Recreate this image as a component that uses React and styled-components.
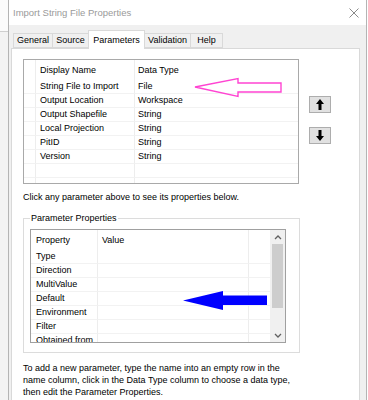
import React from "react";
import styled, { createGlobalStyle } from "styled-components";

const GlobalStyle = createGlobalStyle`
  html, body { margin: 0; padding: 0; background: #ffffff; }
  body {
    font-family: "Liberation Sans", Arial, sans-serif;
    font-size: 9px;
    color: #000;
  }
  * { box-sizing: border-box; }
`;

const Page = styled.div`
  position: relative;
  width: 368px;
  height: 400px;
  overflow: hidden;
  display: flex;
  background: #ffffff;
`;

const LeftStrip = styled.div`
  width: 8px;
  display: flex;
  flex-direction: column;
`;

const StripTop = styled.div`
  height: 32px;
  background: #fbfbfb;
  border-bottom: 1px solid #cfcfcf;
`;

const StripBottom = styled.div`
  flex: 1;
  background: #f3f3f3;
`;

const Dialog = styled.div`
  width: 359px;
  display: flex;
  flex-direction: column;
  background: #f0f0f0;
  border-left: 1px solid #b4b4b4;
  border-right: 1px solid #b4b4b4;
`;

const TitleBar = styled.div`
  height: 25px;
  flex: none;
  background: #ffffff;
  display: flex;
  align-items: center;
  justify-content: space-between;
  padding: 0 7px 0 4px;
`;

const Title = styled.span`
  color: #9a9a9a;
  font-size: 9.5px;
`;

const Body = styled.div`
  flex: 1;
  display: flex;
  flex-direction: column;
  padding-top: 5px;
`;

const TabRow = styled.div`
  display: flex;
  align-items: flex-end;
  height: 18px;
  padding-left: 4px;
`;

const Tab = styled.div`
  position: relative;
  width: ${(p) => p.$w}px;
  height: ${(p) => (p.$active ? 19 : 15)}px;
  margin-bottom: ${(p) => (p.$active ? -1 : 0)}px;
  margin-left: ${(p) => (p.$first ? 0 : -1)}px;
  z-index: ${(p) => (p.$active ? 2 : 1)};
  background: ${(p) => (p.$active ? "#ffffff" : "#f0f0f0")};
  border: 1px solid #d9d9d9;
  border-bottom: ${(p) => (p.$active ? "none" : "1px solid #d9d9d9")};
  display: flex;
  align-items: ${(p) => (p.$active ? "flex-start" : "center")};
  padding-top: ${(p) => (p.$active ? 4 : 0)}px;
  justify-content: center;
  white-space: nowrap;
  line-height: 11px;
`;

const Panel = styled.div`
  flex: 1;
  margin: 0 6px 0 2px;
  background: #ffffff;
  border: 1px solid #d9d9d9;
  padding: 10px 11px;
  display: flex;
  flex-direction: column;
`;

const TopRow = styled.div`
  display: flex;
  gap: 10px;
`;

const ListBox = styled.div`
  width: 276px;
  height: 125px;
  border: 1px solid #a9a9a9;
  overflow: hidden;
  background: #fff;
`;

const Grid = styled.div`
  display: grid;
  grid-template-columns: ${(p) => p.$cols};
  grid-auto-rows: 14px;
  grid-template-rows: 20px;
`;

const Cell = styled.div`
  border-right: ${(p) => (p.$last ? "none" : "1px solid #ededed")};
  border-bottom: ${(p) => (p.$head ? "none" : "1px solid #f2f2f2")};
  padding-left: ${(p) => p.$pad ?? 4}px;
  display: flex;
  align-items: center;
  white-space: nowrap;
  overflow: hidden;
  line-height: 13px;
`;

const ButtonCol = styled.div`
  display: flex;
  flex-direction: column;
  gap: 14px;
  padding-top: 37px;
`;

const MoveButton = styled.div`
  width: 22px;
  height: 17px;
  background: #e1e1e1;
  border: 1px solid #adadad;
  display: flex;
  align-items: center;
  justify-content: center;
`;

const Hint = styled.div`
  margin-top: 7px;
  line-height: 12px;
`;

const GroupBox = styled.fieldset`
  margin: 9px 0 0 0;
  width: 277px;
  border: 1px solid #dcdcdc;
  padding: 5px 13px 9px 6px;
  min-width: 0;
`;

const Legend = styled.legend`
  padding: 0 1px;
  line-height: 12px;
`;

const PropBox = styled.div`
  width: 256px;
  height: 114px;
  border: 1px solid #a0a0a0;
  display: flex;
  overflow: hidden;
`;

const PropGridWrap = styled.div`
  flex: 1;
  overflow: hidden;
`;

const ScrollBar = styled.div`
  width: 15px;
  background: #f0f0f0;
  display: flex;
  flex-direction: column;
  align-items: center;
`;

const ScrollArrow = styled.div`
  height: 14px;
  width: 100%;
  display: flex;
  align-items: center;
  justify-content: center;
`;

const ScrollTrack = styled.div`
  flex: 1;
  width: 100%;
  display: flex;
  justify-content: center;
`;

const Thumb = styled.div`
  width: 11px;
  height: 64px;
  background: #cdcdcd;
`;

const Footer = styled.div`
  margin-top: 9px;
  line-height: 12px;
  width: 270px;
`;

const Overlay = styled.svg`
  position: absolute;
  left: 0;
  top: 0;
  pointer-events: none;
`;

const RightGap = styled.div`
  flex: 1;
  background: #ffffff;
`;

const params = [
  ["String File to Import", "File"],
  ["Output Location", "Workspace"],
  ["Output Shapefile", "String"],
  ["Local Projection", "String"],
  ["PitID", "String"],
  ["Version", "String"],
  ["", ""],
  ["", ""],
];

const props = ["Type", "Direction", "MultiValue", "Default", "Environment", "Filter", "Obtained from"];

const tabs = [
  ["General", 40],
  ["Source", 37],
  ["Parameters", 57],
  ["Validation", 47],
  ["Help", 33],
];

const Arrow = ({ down }) => (
  <svg width="8" height="11" viewBox="0 0 8 11" style={down ? { transform: "rotate(180deg)" } : undefined}>
    <polygon points="4,0 8,5 5.5,5 5.5,11 2.5,11 2.5,5 0,5" fill="#000" />
  </svg>
);

const Chevron = ({ down }) => (
  <svg width="8" height="5" viewBox="0 0 8 5">
    <polyline
      points={down ? "1,1 4,4 7,1" : "1,4 4,1 7,4"}
      fill="none"
      stroke="#606060"
      strokeWidth="1.3"
    />
  </svg>
);

export default function App() {
  return (
    <>
      <GlobalStyle />
      <Page>
        <LeftStrip>
          <StripTop />
          <StripBottom />
        </LeftStrip>
        <Dialog>
          <TitleBar>
            <Title>Import String File Properties</Title>
            <svg width="10" height="10" viewBox="0 0 10 10">
              <path d="M0.5 0.5 L9.5 9.5 M9.5 0.5 L0.5 9.5" stroke="#8a8a8a" strokeWidth="1" />
            </svg>
          </TitleBar>
          <Body>
            <TabRow>
              {tabs.map(([t, w], i) => (
                <Tab key={t} $w={w} $first={i === 0} $active={t === "Parameters"}>
                  {t}
                </Tab>
              ))}
            </TabRow>
            <Panel>
              <TopRow>
                <ListBox>
                  <Grid $cols="12px 99px 1fr">
                    <Cell $head />
                    <Cell $head>Display Name</Cell>
                    <Cell $head $last $pad={3}>Data Type</Cell>
                    {params.map(([n, t], i) => (
                      <React.Fragment key={i}>
                        <Cell />
                        <Cell>{n}</Cell>
                        <Cell $last $pad={3}>{t}</Cell>
                      </React.Fragment>
                    ))}
                  </Grid>
                </ListBox>
                <ButtonCol>
                  <MoveButton>
                    <Arrow />
                  </MoveButton>
                  <MoveButton>
                    <Arrow down />
                  </MoveButton>
                </ButtonCol>
              </TopRow>
              <Hint>Click any parameter above to see its properties below.</Hint>
              <GroupBox>
                <Legend>Parameter Properties</Legend>
                <PropBox>
                  <PropGridWrap>
                    <Grid $cols="67px 151px 1fr">
                      <Cell $head $pad={5}>Property</Cell>
                      <Cell $head>Value</Cell>
                      <Cell $head $last />
                      {props.map((p) => (
                        <React.Fragment key={p}>
                          <Cell $pad={5}>{p}</Cell>
                          <Cell />
                          <Cell $last />
                        </React.Fragment>
                      ))}
                    </Grid>
                  </PropGridWrap>
                  <ScrollBar>
                    <ScrollArrow>
                      <Chevron />
                    </ScrollArrow>
                    <ScrollTrack>
                      <Thumb />
                    </ScrollTrack>
                    <ScrollArrow>
                      <Chevron down />
                    </ScrollArrow>
                  </ScrollBar>
                </PropBox>
              </GroupBox>
              <Footer>
                To add a new parameter, type the name into an empty row in the name column, click in the Data Type column to choose a data type, then edit the Parameter Properties.
              </Footer>
            </Panel>
          </Body>
        </Dialog>
        <RightGap />
        <Overlay width="368" height="400" viewBox="0 0 368 400">
          <polygon
            points="195,87 238,78.5 238,83 281,83 281,92 238,92 238,96.5"
            fill="none"
            stroke="#ff44d2"
            strokeWidth="1.4"
            strokeLinejoin="miter"
          />
          <polygon points="183,300.5 223,291 223,295.5 267,295.5 267,305 223,305 223,310" fill="#0000ff" />
        </Overlay>
      </Page>
    </>
  );
}
